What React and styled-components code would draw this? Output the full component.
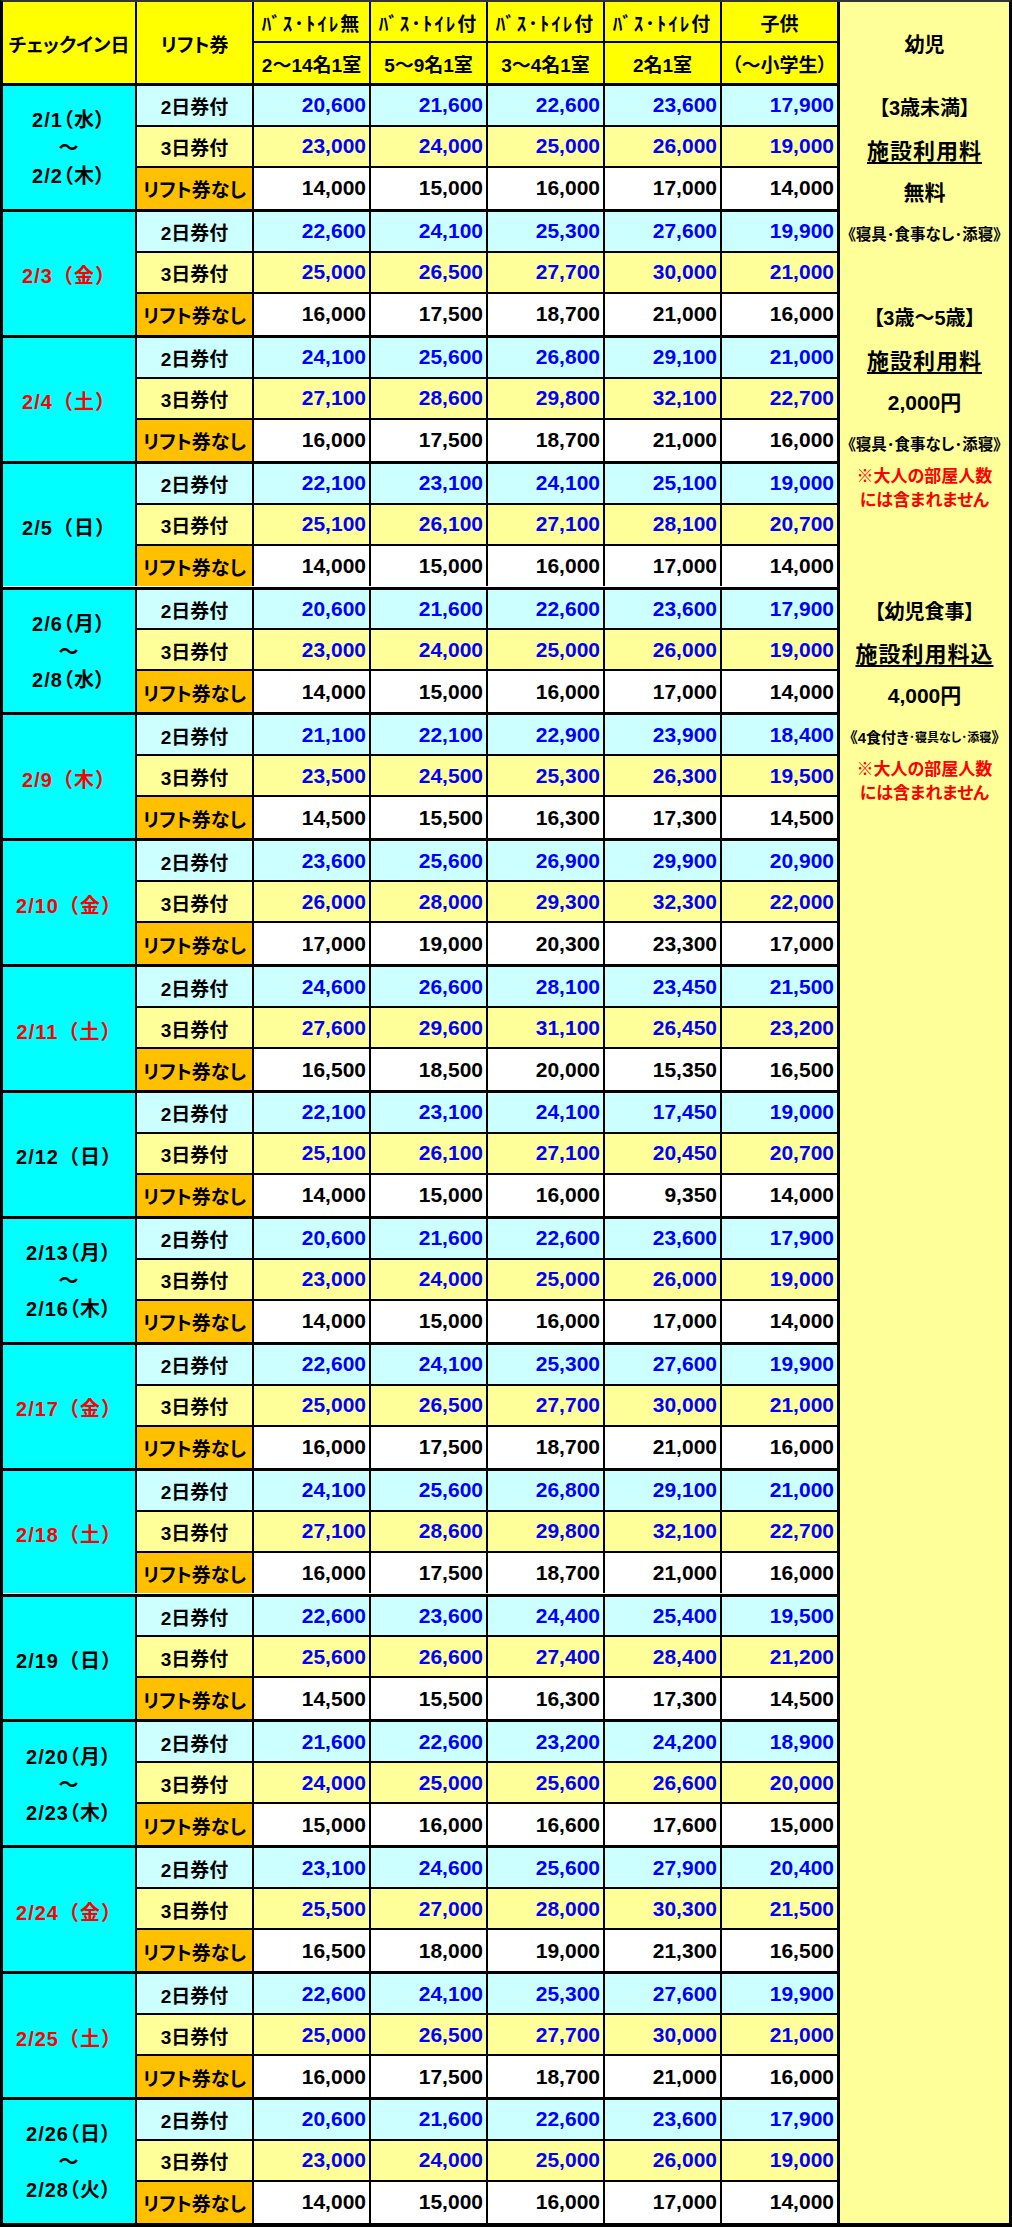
import React from 'react';
import styled, { createGlobalStyle, css } from 'styled-components';

// column widths of the priced part (date, lift, 4 room types, kid)
const COLS = '134px 117px 117px 117px 117px 117px 115px';
const GROUP_H = 125.88;
const ROW_H = GROUP_H / 3;

const ROW_BG = ['#ccffff', '#ffff99', '#ffffff'];
const LIFT_BG = ['#ccffff', '#ffff99', '#ffc000'];
const LIFT_LABEL = ['2日券付', '3日券付', 'リフト券なし'];

const weeks = [
  { date: ['2/1（水）', '2/2（木）'], rows: [
    ['20,600', '21,600', '22,600', '23,600', '17,900'],
    ['23,000', '24,000', '25,000', '26,000', '19,000'],
    ['14,000', '15,000', '16,000', '17,000', '14,000'] ] },
  { date: '2/3（金）', red: true, rows: [
    ['22,600', '24,100', '25,300', '27,600', '19,900'],
    ['25,000', '26,500', '27,700', '30,000', '21,000'],
    ['16,000', '17,500', '18,700', '21,000', '16,000'] ] },
  { date: '2/4（土）', red: true, rows: [
    ['24,100', '25,600', '26,800', '29,100', '21,000'],
    ['27,100', '28,600', '29,800', '32,100', '22,700'],
    ['16,000', '17,500', '18,700', '21,000', '16,000'] ] },
  { date: '2/5（日）', rows: [
    ['22,100', '23,100', '24,100', '25,100', '19,000'],
    ['25,100', '26,100', '27,100', '28,100', '20,700'],
    ['14,000', '15,000', '16,000', '17,000', '14,000'] ] },
  { date: ['2/6（月）', '2/8（水）'], rows: [
    ['20,600', '21,600', '22,600', '23,600', '17,900'],
    ['23,000', '24,000', '25,000', '26,000', '19,000'],
    ['14,000', '15,000', '16,000', '17,000', '14,000'] ] },
  { date: '2/9（木）', red: true, rows: [
    ['21,100', '22,100', '22,900', '23,900', '18,400'],
    ['23,500', '24,500', '25,300', '26,300', '19,500'],
    ['14,500', '15,500', '16,300', '17,300', '14,500'] ] },
  { date: '2/10（金）', red: true, rows: [
    ['23,600', '25,600', '26,900', '29,900', '20,900'],
    ['26,000', '28,000', '29,300', '32,300', '22,000'],
    ['17,000', '19,000', '20,300', '23,300', '17,000'] ] },
  { date: '2/11（土）', red: true, rows: [
    ['24,600', '26,600', '28,100', '23,450', '21,500'],
    ['27,600', '29,600', '31,100', '26,450', '23,200'],
    ['16,500', '18,500', '20,000', '15,350', '16,500'] ] },
  { date: '2/12（日）', rows: [
    ['22,100', '23,100', '24,100', '17,450', '19,000'],
    ['25,100', '26,100', '27,100', '20,450', '20,700'],
    ['14,000', '15,000', '16,000', '9,350', '14,000'] ] },
  { date: ['2/13（月）', '2/16（木）'], rows: [
    ['20,600', '21,600', '22,600', '23,600', '17,900'],
    ['23,000', '24,000', '25,000', '26,000', '19,000'],
    ['14,000', '15,000', '16,000', '17,000', '14,000'] ] },
  { date: '2/17（金）', red: true, rows: [
    ['22,600', '24,100', '25,300', '27,600', '19,900'],
    ['25,000', '26,500', '27,700', '30,000', '21,000'],
    ['16,000', '17,500', '18,700', '21,000', '16,000'] ] },
  { date: '2/18（土）', red: true, rows: [
    ['24,100', '25,600', '26,800', '29,100', '21,000'],
    ['27,100', '28,600', '29,800', '32,100', '22,700'],
    ['16,000', '17,500', '18,700', '21,000', '16,000'] ] },
  { date: '2/19（日）', rows: [
    ['22,600', '23,600', '24,400', '25,400', '19,500'],
    ['25,600', '26,600', '27,400', '28,400', '21,200'],
    ['14,500', '15,500', '16,300', '17,300', '14,500'] ] },
  { date: ['2/20（月）', '2/23（木）'], rows: [
    ['21,600', '22,600', '23,200', '24,200', '18,900'],
    ['24,000', '25,000', '25,600', '26,600', '20,000'],
    ['15,000', '16,000', '16,600', '17,600', '15,000'] ] },
  { date: '2/24（金）', red: true, rows: [
    ['23,100', '24,600', '25,600', '27,900', '20,400'],
    ['25,500', '27,000', '28,000', '30,300', '21,500'],
    ['16,500', '18,000', '19,000', '21,300', '16,500'] ] },
  { date: '2/25（土）', red: true, rows: [
    ['22,600', '24,100', '25,300', '27,600', '19,900'],
    ['25,000', '26,500', '27,700', '30,000', '21,000'],
    ['16,000', '17,500', '18,700', '21,000', '16,000'] ] },
  { date: ['2/26（日）', '2/28（火）'], rows: [
    ['20,600', '21,600', '22,600', '23,600', '17,900'],
    ['23,000', '24,000', '25,000', '26,000', '19,000'],
    ['14,000', '15,000', '16,000', '17,000', '14,000'] ] },
];

const GlobalStyle = createGlobalStyle`
  html, body { margin: 0; padding: 0; background: #fff; }
  body {
    font-family: "Liberation Sans", "Noto Sans CJK JP", sans-serif;
    font-weight: 700;
    color: #000;
    font-feature-settings: "palt";
  }
  * { box-sizing: border-box; }
`;

const Sheet = styled.div`
  display: flex;
  width: 1012px;
  border: 3px solid #000;
  border-top: 2px solid #333;
  border-bottom-width: 4px;
`;

const Main = styled.div`
  flex: none;
  width: 837px;
  display: flex;
  flex-direction: column;
  border-right: 3px solid #000;
`;

const cell = css`
  display: flex;
  align-items: center;
  justify-content: center;
  border-right: ${p => (p.$end ? 'none' : '2px solid #000')};
  border-bottom: ${p => (p.$bottom ? '2px solid #000' : 'none')};
  white-space: nowrap;
`;

const Header = styled.div`
  display: grid;
  grid-template-columns: ${COLS};
  grid-template-rows: 41px 40px;
  background: #ffff00;
  border-bottom: 3px solid #000;
`;

const HeadCell = styled.div`
  ${cell};
  grid-row: ${p => (p.$tall ? 'span 2' : 'auto')};
  font-size: 19px;
  letter-spacing: ${p => (p.$spaced ? '2px' : '0')};
  padding-top: 1px;
`;

const Group = styled.div`
  display: grid;
  grid-template-columns: ${COLS};
  grid-template-rows: repeat(3, 1fr);
  height: ${GROUP_H}px;
  border-bottom: 3px solid #000;

  &:last-child {
    border-bottom: none;
    height: ${GROUP_H - 3}px;
  }
`;

const DateCell = styled.div`
  ${cell};
  grid-row: span 3;
  flex-direction: column;
  background: #00ffff;
  color: ${p => (p.$red ? '#ff0000' : '#000')};
  font-size: 20px;
  line-height: 28px;
  ${p => p.$single ? css`
    font-feature-settings: normal;
    letter-spacing: 1px;
    padding-top: 6px;
  ` : css`
    letter-spacing: 1px;
    padding-top: 2px;
  `}
`;

const LiftCell = styled.div`
  ${cell};
  background: ${p => LIFT_BG[p.$tone]};
  font-size: 19px;
  padding-top: 1px;
`;

const PriceCell = styled.div`
  ${cell};
  justify-content: flex-end;
  padding-right: 3px;
  background: ${p => ROW_BG[p.$tone]};
  color: ${p => (p.$tone < 2 ? '#0000ff' : '#000')};
  font-size: 21px;
`;

const Infant = styled.div`
  flex: 1;
  display: flex;
  flex-direction: column;
  background: #ffff99;
`;

const InfantHead = styled.div`
  height: 84px;
  display: flex;
  align-items: center;
  justify-content: center;
  font-size: 20px;
  padding-bottom: 2px;
`;

const Note = styled.div`
  flex: none;
  height: ${p => (p.$rows || 1) * ROW_H}px;
  display: flex;
  align-items: center;
  justify-content: center;
  white-space: nowrap;
  font-size: ${p => p.$size || 20}px;
  letter-spacing: ${p => p.$ls || 0}px;
  text-decoration: ${p => (p.$under ? 'underline' : 'none')};
  text-decoration-thickness: 2px;
  text-underline-offset: 3px;
`;

const RedNote = styled.div`
  flex: none;
  height: ${ROW_H * 2}px;
  display: flex;
  flex-direction: column;
  align-items: center;
  padding-top: 1px;
  color: #ff0000;
  font-size: 17px;
  line-height: 24px;
`;

const Small = styled.span`
  font-size: ${p => p.$size}px;
`;

function Week({ week }) {
  const single = !Array.isArray(week.date);
  return (
    <Group>
      <DateCell $red={week.red} $single={single}>
        {single ? week.date : (
          <>
            <span>{week.date[0]}</span>
            <span>～</span>
            <span>{week.date[1]}</span>
          </>
        )}
      </DateCell>
      {week.rows.map((row, r) => (
        <React.Fragment key={r}>
          <LiftCell $tone={r} $bottom={r < 2}>{LIFT_LABEL[r]}</LiftCell>
          {row.map((v, c) => (
            <PriceCell key={c} $tone={r} $bottom={r < 2} $end={c === 4}>{v}</PriceCell>
          ))}
        </React.Fragment>
      ))}
    </Group>
  );
}

function RedRemark() {
  return (
    <RedNote>
      <span>※大人の部屋人数</span>
      <span>には含まれません</span>
    </RedNote>
  );
}

export default function App() {
  return (
    <>
      <GlobalStyle />
      <Sheet>
        <Main>
          <Header>
            <HeadCell $tall>チェックイン日</HeadCell>
            <HeadCell $tall>リフト券</HeadCell>
            <HeadCell $bottom $spaced>ﾊﾞｽ･ﾄｲﾚ無</HeadCell>
            <HeadCell $bottom $spaced>ﾊﾞｽ･ﾄｲﾚ付</HeadCell>
            <HeadCell $bottom $spaced>ﾊﾞｽ･ﾄｲﾚ付</HeadCell>
            <HeadCell $bottom $spaced>ﾊﾞｽ･ﾄｲﾚ付</HeadCell>
            <HeadCell $bottom $end>子供</HeadCell>
            <HeadCell>2～14名1室</HeadCell>
            <HeadCell>5～9名1室</HeadCell>
            <HeadCell>3～4名1室</HeadCell>
            <HeadCell>2名1室</HeadCell>
            <HeadCell $end>（～小学生）</HeadCell>
          </Header>
          {weeks.map((w, i) => <Week key={i} week={w} />)}
        </Main>
        <Infant>
          <InfantHead>幼児</InfantHead>
          <Note>【3歳未満】</Note>
          <Note $size={22} $ls={1} $under>施設利用料</Note>
          <Note $size={21}>無料</Note>
          <Note $size={15.5}>《寝具･食事なし･添寝》</Note>
          <Note />
          <Note>【3歳～5歳】</Note>
          <Note $size={22} $ls={1} $under>施設利用料</Note>
          <Note $size={21}>2,000円</Note>
          <Note $size={15.5}>《寝具･食事なし･添寝》</Note>
          <RedRemark />
          <Note />
          <Note>【幼児食事】</Note>
          <Note $size={22} $ls={1} $under>施設利用料込</Note>
          <Note $size={21}>4,000円</Note>
          <Note $size={15}>《4食付き<Small $size={12}>･寝具なし･添寝</Small>》</Note>
          <RedRemark />
        </Infant>
      </Sheet>
    </>
  );
}
